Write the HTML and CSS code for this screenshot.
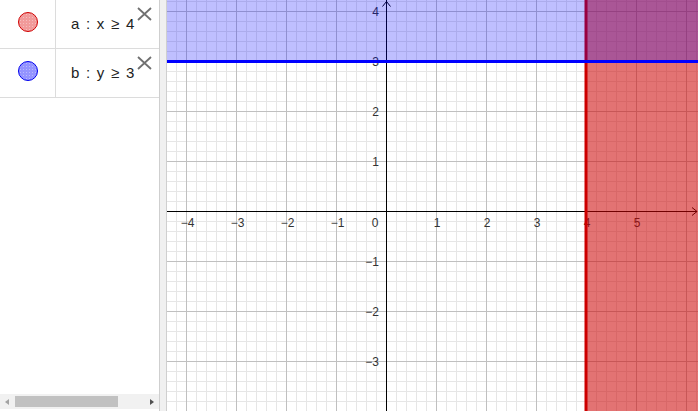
FILE: index.html
```html
<!DOCTYPE html>
<html>
<head>
<meta charset="utf-8">
<link rel="stylesheet" href="styles.css">
</head>
<body>
<div class="app">
  <div class="algebra">
    <div class="row">
      <div class="marble-col"><span class="marble marble-red"></span></div>
      <div class="formula">a : x ≥ 4</div>
      <svg class="close" width="15" height="14" viewBox="0 0 15 14"><path d="M1 1 L14 13 M14 1 L1 13" stroke="#707070" stroke-width="1.8" fill="none"/></svg>
    </div>
    <div class="row">
      <div class="marble-col"><span class="marble marble-blue"></span></div>
      <div class="formula">b : y ≥ 3</div>
      <svg class="close" width="15" height="14" viewBox="0 0 15 14"><path d="M1 1 L14 13 M14 1 L1 13" stroke="#707070" stroke-width="1.8" fill="none"/></svg>
    </div>
    <div class="spacer"></div>
    <div class="hscroll">
      <span class="arrow arrow-left"></span>
      <span class="thumb"></span>
      <span class="track"></span>
      <span class="arrow arrow-right"></span>
    </div>
  </div>
  <div class="splitter"></div>
  <div class="graph">
    <svg width="531" height="411" viewBox="167 0 531 411">
      <defs>
        <pattern id="minor" patternUnits="userSpaceOnUse" x="386" y="211" width="10" height="10">
          <path d="M0.5 0 V10 M0 0.5 H10" stroke="#e6e6e6" stroke-width="1" fill="none"/>
        </pattern>
        <pattern id="major" patternUnits="userSpaceOnUse" x="386" y="211" width="50" height="50">
          <path d="M0.5 0 V50 M0 0.5 H50" stroke="#c0c0c0" stroke-width="1" fill="none"/>
        </pattern>
      </defs>
      <rect x="167" y="0" width="531" height="411" fill="#ffffff"/>
      <rect x="167" y="0" width="531" height="411" fill="url(#minor)"/>
      <rect x="167" y="0" width="531" height="411" fill="url(#major)"/>
      <g class="axes" stroke="#000" stroke-width="1" fill="none">
        <path d="M167 211.5 H697"/>
        <path d="M386.5 0 V411"/>
        <path d="M382.5 6.5 L386.5 1.5 L390.5 6.5"/>
        <path d="M692 207.5 L697 211.5 L692 215.5"/>
      </g>
      <g class="labels" font-family="Liberation Sans, Arial, sans-serif" font-size="12" fill="#333">
        <text x="187.5" y="227" text-anchor="middle">−4</text>
        <text x="237.5" y="227" text-anchor="middle">−3</text>
        <text x="287.5" y="227" text-anchor="middle">−2</text>
        <text x="337.5" y="227" text-anchor="middle">−1</text>
        <text x="375" y="227" text-anchor="middle">0</text>
        <text x="437" y="227" text-anchor="middle">1</text>
        <text x="487" y="227" text-anchor="middle">2</text>
        <text x="537" y="227" text-anchor="middle">3</text>
        <text x="587" y="227" text-anchor="middle">4</text>
        <text x="637" y="227" text-anchor="middle">5</text>
        <text x="379" y="16" text-anchor="end">4</text>
        <text x="379" y="66" text-anchor="end">3</text>
        <text x="379" y="116" text-anchor="end">2</text>
        <text x="379" y="166" text-anchor="end">1</text>
        <text x="379" y="266" text-anchor="end">−1</text>
        <text x="379" y="316" text-anchor="end">−2</text>
        <text x="379" y="366" text-anchor="end">−3</text>
      </g>
      <rect x="586.5" y="0" width="112" height="411" fill="#cc0000" fill-opacity="0.55"/>
      <path d="M586 0 V411" stroke="#cc0000" stroke-width="3"/>
      <rect x="167" y="0" width="531" height="61.5" fill="#0000ff" fill-opacity="0.25"/>
      <path d="M167 61.5 H698" stroke="#0000ff" stroke-width="3"/>
    </svg>
  </div>
</div>
</body>
</html>
```
FILE: styles.css
```css
html, body {
  margin: 0;
  padding: 0;
  background: #ffffff;
}
.app {
  display: flex;
  width: 698px;
  height: 411px;
  overflow: hidden;
  font-family: "Liberation Sans", Arial, sans-serif;
}
.algebra {
  width: 159px;
  height: 411px;
  border-right: 1px solid #cfcfcf;
  display: flex;
  flex-direction: column;
  background: #fff;
}
.row {
  position: relative;
  display: flex;
  height: 48px;
  border-bottom: 1px solid #dcdcdc;
}
.marble-col {
  width: 56px;
  border-right: 1px solid #dcdcdc;
  display: flex;
  justify-content: center;
  align-items: flex-start;
  padding-top: 12px;
  box-sizing: border-box;
}
.marble {
  width: 20px;
  height: 20px;
  border-radius: 50%;
  box-sizing: border-box;
}
.marble-red {
  border: 1px solid #d00000;
  background-color: #f19a9a;
  background-image: radial-gradient(circle, rgba(255,255,255,0.35) 0.6px, transparent 0.8px);
  background-size: 3px 3px;
}
.marble-blue {
  border: 1px solid #0000ee;
  background-color: #9494ff;
  background-image: radial-gradient(circle, rgba(255,255,255,0.35) 0.6px, transparent 0.8px);
  background-size: 3px 3px;
}
.formula {
  padding-left: 15px;
  padding-top: 15px;
  font-size: 15px;
  line-height: 18px;
  color: #222;
  word-spacing: 2.5px;
  white-space: nowrap;
}
.close {
  position: absolute;
  right: 7px;
  top: 7px;
}
.spacer {
  flex: 1;
}
.hscroll {
  height: 15px;
  margin-bottom: 2px;
  background: #f1f1f1;
  display: flex;
  align-items: center;
}
.arrow {
  width: 0;
  height: 0;
  border-top: 3.5px solid transparent;
  border-bottom: 3.5px solid transparent;
}
.arrow-left {
  margin-left: 5px;
  border-right: 4px solid #a3a3a3;
}
.thumb {
  margin-left: 6px;
  width: 103px;
  height: 11px;
  background: #c1c1c1;
}
.track {
  flex: 1;
}
.arrow-right {
  margin-right: 5px;
  border-left: 4px solid #505050;
}
.splitter {
  width: 6px;
  height: 411px;
  background: #f0f0f0;
  border-right: 1px solid #cfcfcf;
}
.graph {
  width: 531px;
  height: 411px;
}
.graph svg {
  display: block;
}
```
